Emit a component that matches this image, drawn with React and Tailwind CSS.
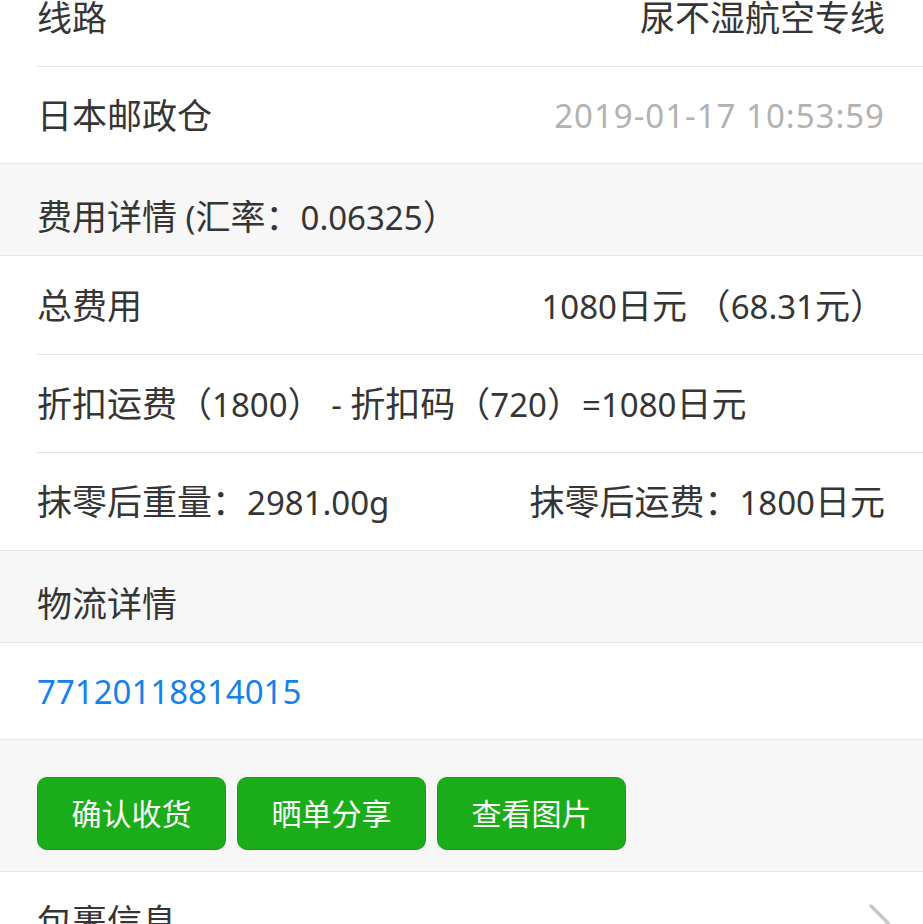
import React from "react";

const CJK = /([\u3000-\u303f\u4e00-\u9fff\uff00-\uffef]+)/;

function T({ children, className = "" }) {
  const parts = String(children).split(CJK).filter((p) => p !== "");
  return (
    <span className={className}>
      {parts.map((p, i) =>
        CJK.test(p) ? (
          <span key={i} className="text-[35px]">
            {p}
          </span>
        ) : (
          <span key={i} className="text-[33px]">
            {p}
          </span>
        )
      )}
    </span>
  );
}

function Row({ children, inset = true, h = "h-[98px]" }) {
  return (
    <div
      className={`flex items-center justify-between border-b border-[#e5e5e5] pr-[38px] ${h} ${
        inset ? "ml-[37px]" : "pl-[37px]"
      }`}
    >
      {children}
    </div>
  );
}

function Header({ children }) {
  return (
    <div className="flex h-[92px] items-center border-b border-[#e5e5e5] bg-[#f7f7f7] pl-[37px] pt-[14px]">
      {children}
    </div>
  );
}

export default function App() {
  return (
    <div className="h-[924px] w-full overflow-hidden bg-white font-['Noto_Sans','Noto_Sans_CJK_SC',sans-serif] text-[33px] leading-none text-[#353535]">
      <div className="-mt-[31px]">
        <Row h="h-[98px]">
          <T>线路</T>
          <T>尿不湿航空专线</T>
        </Row>
        <Row inset={false} h="h-[97px]">
          <T>日本邮政仓</T>
          <span className="tracking-[1px] text-[#b2b2b2]">2019-01-17 10:53:59</span>
        </Row>
        <Header>
          <T>费用详情 (汇率：0.06325）</T>
        </Header>
        <Row h="h-[99px]">
          <T>总费用</T>
          <T>1080日元  （68.31元）</T>
        </Row>
        <Row h="h-[98px]">
          <T>折扣运费（1800） - 折扣码（720）=1080日元</T>
        </Row>
        <Row inset={false} h="h-[98px]">
          <T>抹零后重量：2981.00g</T>
          <T>抹零后运费：1800日元</T>
        </Row>
        <Header>
          <T>物流详情</T>
        </Header>
        <Row inset={false} h="h-[97px]">
          <span className="text-[#1581ec]">77120118814015</span>
        </Row>
        <div className="flex h-[132px] gap-[11px] border-b border-[#e5e5e5] bg-[#f7f7f7] pl-[37px] pt-[37px]">
          {["确认收货", "晒单分享", "查看图片"].map((t) => (
            <button
              key={t}
              className="flex h-[73px] w-[189px] items-center justify-center rounded-[10px] border border-[#179b16] bg-[#1aad19] text-[30px] text-white"
            >
              {t}
            </button>
          ))}
        </div>
        <div className="flex h-[98px] items-center justify-between pl-[37px] pr-[30px]">
          <T>包裹信息</T>
          <svg width="26" height="42" viewBox="0 0 26 42" className="mt-[4px]">
            <polyline
              points="4,4 21,21 4,38"
              fill="none"
              stroke="#c7c7cc"
              strokeWidth="3.5"
              strokeLinecap="round"
              strokeLinejoin="round"
            />
          </svg>
        </div>
      </div>
    </div>
  );
}
